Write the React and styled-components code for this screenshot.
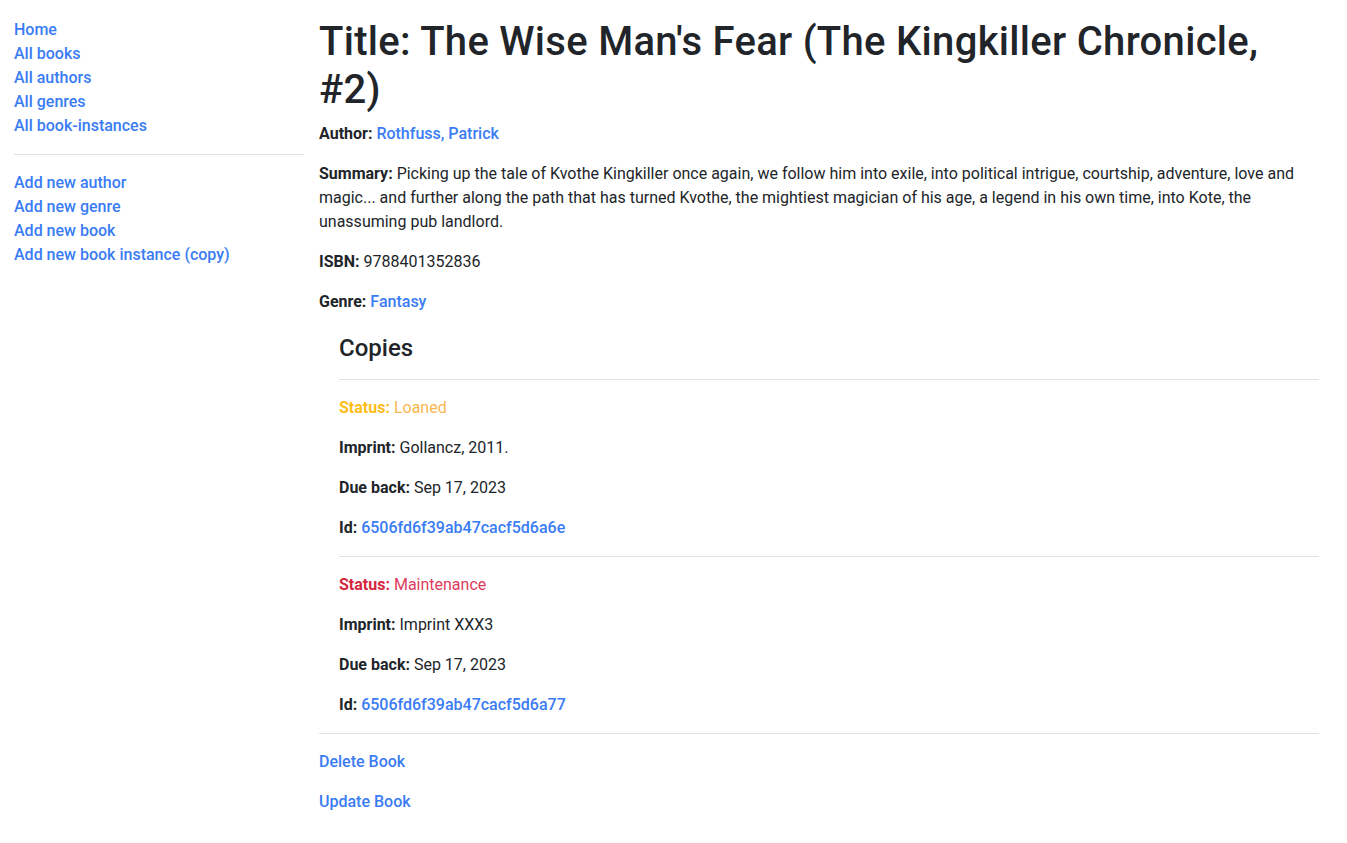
import React from "react";
import styled, { createGlobalStyle } from "styled-components";

const Global = createGlobalStyle`
  html, body { margin: 0; padding: 0; background: #fff; }
  body {
    font-family: Roboto, "Liberation Sans", Arial, sans-serif;
    font-size: 16px;
    line-height: 1.5;
    color: #212529;
  }
  * { box-sizing: border-box; }
`;

const Page = styled.div`
  display: grid;
  grid-template-columns: 290px 1000px;
  column-gap: 15px;
  align-items: start;
  padding: 0 28px 0 14px;
`;

const Sidebar = styled.nav`
  display: block;
  padding-top: 18px;
`;

const NavList = styled.ul`
  list-style: none;
  margin: 0;
  padding: 0;
`;

const Link = styled.a`
  color: #3a7cf4;
  text-decoration: none;
  font-weight: 500;
  cursor: pointer;
`;

const Rule = styled.hr`
  border: 0;
  border-top: 1px solid #dee2e6;
  margin: 16px 0;
`;

const Main = styled.main`
  display: block;
  padding-top: 18px;
`;

const Title = styled.h1`
  font-size: 40px;
  font-weight: 500;
  line-height: 1.2;
  letter-spacing: 0.3px;
  margin: 0 0 8px;
`;

const Para = styled.p`
  margin: 0 0 16px;
`;

const Label = styled.strong`
  font-weight: 700;
  color: ${(p) => p.$color || "inherit"};
`;

const Copies = styled.section`
  margin: 20px 0 0 20px;
`;

const SubTitle = styled.h4`
  font-size: 24px;
  font-weight: 500;
  line-height: 1.2;
  margin: 0 0 8px;
`;

const Value = styled.span`
  color: ${(p) => p.$color || "inherit"};
`;

const navTop = ["Home", "All books", "All authors", "All genres", "All book-instances"];
const navBottom = ["Add new author", "Add new genre", "Add new book", "Add new book instance (copy)"];

const copies = [
  {
    status: "Loaned",
    labelColor: "#ffbd17",
    valueColor: "#f8b850",
    imprint: "Gollancz, 2011.",
    due: "Sep 17, 2023",
    id: "6506fd6f39ab47cacf5d6a6e",
  },
  {
    status: "Maintenance",
    labelColor: "#d3253d",
    valueColor: "#dc3c5c",
    imprint: "Imprint XXX3",
    due: "Sep 17, 2023",
    id: "6506fd6f39ab47cacf5d6a77",
  },
];

export default function App() {
  return (
    <>
      <Global />
      <Page>
        <Sidebar>
          <NavList>
            {navTop.map((t) => (
              <li key={t}>
                <Link>{t}</Link>
              </li>
            ))}
          </NavList>
          <Rule />
          <NavList>
            {navBottom.map((t) => (
              <li key={t}>
                <Link>{t}</Link>
              </li>
            ))}
          </NavList>
        </Sidebar>
        <Main>
          <Title>Title: The Wise Man's Fear (The Kingkiller Chronicle, #2)</Title>
          <Para>
            <Label>Author:</Label> <Link>Rothfuss, Patrick</Link>
          </Para>
          <Para>
            <Label>Summary:</Label> Picking up the tale of Kvothe Kingkiller once again, we follow him into exile, into
            political intrigue, courtship, adventure, love and magic... and further along the path that has turned
            Kvothe, the mightiest magician of his age, a legend in his own time, into Kote, the unassuming pub landlord.
          </Para>
          <Para>
            <Label>ISBN:</Label> 9788401352836
          </Para>
          <Para>
            <Label>Genre:</Label> <Link>Fantasy</Link>
          </Para>
          <Copies>
            <SubTitle>Copies</SubTitle>
            {copies.map((c) => (
              <div key={c.id}>
                <Rule />
                <Para>
                  <Label $color={c.labelColor}>Status:</Label> <Value $color={c.valueColor}>{c.status}</Value>
                </Para>
                <Para>
                  <Label>Imprint:</Label> {c.imprint}
                </Para>
                <Para>
                  <Label>Due back:</Label> {c.due}
                </Para>
                <Para>
                  <Label>Id:</Label> <Link>{c.id}</Link>
                </Para>
              </div>
            ))}
          </Copies>
          <Rule />
          <Para>
            <Link>Delete Book</Link>
          </Para>
          <Para>
            <Link>Update Book</Link>
          </Para>
        </Main>
      </Page>
    </>
  );
}
